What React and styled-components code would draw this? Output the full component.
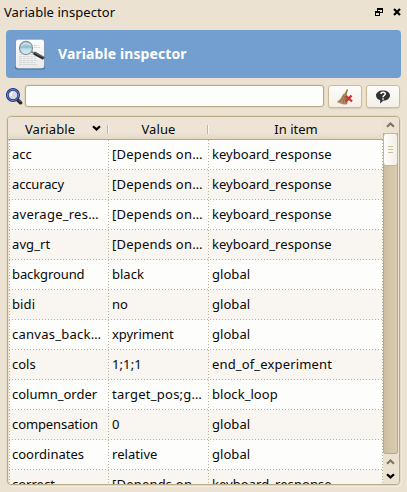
import React from 'react';
import styled, { createGlobalStyle } from 'styled-components';

const Global = createGlobalStyle`
  * { box-sizing: border-box; }
  body { margin: 0; background: #ebe2d1; overflow: hidden; }
`;

const Dock = styled.main`
  width: 407px;
  height: 492px;
  display: flex;
  flex-direction: column;
  padding: 0 6px 6px;
  background: #ebe2d1;
  color: #080808;
  font: 13px/18px "Noto Sans", "Open Sans", sans-serif;
`;

const TitleBar = styled.header`
  height: 30px;
  display: flex;
  align-items: center;
  padding: 0 0 6px;
  margin-left: -2px;
`;

const Label = styled.span`
  white-space: pre;
  letter-spacing: ${(p) => p.$track || 0}px;
`;

const WindowButtons = styled.div`
  margin-left: auto;
  display: flex;
  gap: 10px;
  svg { display: block; }
`;

const Banner = styled.section`
  height: 48px;
  display: flex;
  align-items: center;
  gap: 12px;
  padding-left: 8px;
  border-radius: 4px;
  background: #729fd0;
  color: #fff;
  font-size: 14px;
  font-weight: 700;
`;

const SearchRow = styled.div`
  display: flex;
  height: 24px;
  margin-top: 6px;
`;

const SearchIcon = styled.svg`
  flex: none;
  margin: 4px 2px 0 0;
`;

const SearchInput = styled.input`
  width: 299px;
  height: 22px;
  margin-top: 1px;
  padding: 0 5px;
  border: 1px solid #b9a888;
  border-radius: 3px;
  background: #fdfdfc;
  box-shadow: 0 0 0 1px #e3d8c4;
  outline: none;
`;

const ToolButton = styled.button`
  width: 34px;
  height: 23px;
  margin: 1px 0 0 ${(p) => p.$gap}px;
  padding: 0;
  display: grid;
  place-items: center;
  border: 1px solid #cdbb98;
  border-radius: 3px;
  background: linear-gradient(#fdfcfa, #f5f0e7);
  box-shadow: 0 1px 1px #d8ccb6;
`;

const TableFrame = styled.section`
  width: 393px;
  height: 369px;
  margin: 8px 0 0 1px;
  display: flex;
  border: 1px solid #bbaa87;
  border-radius: 4px;
  box-shadow: 0 0 0 1px #e2d7c2, 1px 1px 0 1px #f4eee2;
  overflow: hidden;
`;

const Grid = styled.div`
  flex: none;
  width: 375px;
  padding-left: 1px;
  overflow: hidden;
`;

const HeaderRow = styled.div`
  display: grid;
  grid-template-columns: 99px 100px 175px;
  height: 23px;
  margin-left: -1px;
  padding-left: 1px;
  background: linear-gradient(#ede4d5 70%, #e3d8c4);
  border-bottom: 1px solid #b7a682;
`;

const HeaderCell = styled.div`
  display: flex;
  align-items: center;
  justify-content: center;
  padding: 1px 0 0 1px;
  position: relative;
  & + &::before {
    content: "";
    position: absolute;
    left: -1px;
    top: 8px;
    width: 2px;
    height: 9px;
    background: linear-gradient(90deg, #c5b594 50%, #faf7f0 50%);
  }
`;

const SortArrow = styled.span`
  display: flex;
  margin: 0 -8px 2px 17px;
`;

const hDots = 'repeating-linear-gradient(90deg, #bcb199 0 1px, transparent 1px 3px)';
const vDots = 'repeating-linear-gradient(#bcb199 0 1px, transparent 1px 3px)';

const Row = styled.div`
  display: grid;
  grid-template-columns: 99px 100px 175px;
  height: 30px;
  background:
    ${hDots} 0 29px / 100% 1px no-repeat,
    ${vDots} 0 0 / 1px 100% no-repeat,
    ${vDots} 99px 0 / 1px 100% no-repeat,
    ${vDots} 199px 0 / 1px 100% no-repeat,
    ${vDots} 373px 0 / 1px 100% no-repeat,
    ${(p) => (p.$alt ? '#f9f5f0' : '#fdfdfc')};
`;

const Cell = styled.div`
  display: flex;
  align-items: center;
  padding: 0 0 3px ${(p) => p.$pad || 4}px;
  overflow: hidden;
`;

const ScrollBar = styled.aside`
  flex: none;
  width: 16px;
  display: flex;
  flex-direction: column;
  background: #ebe2d1;
  svg { display: block; margin-left: 3px; flex: none; }
`;

const UpStep = styled.div`
  height: 16px;
  padding-top: 5px;
`;

const Track = styled.div`
  height: 321px;
  width: 15px;
  border: 1px solid #bba985;
  border-top: 0;
  border-radius: 0 0 3px 3px;
  background: linear-gradient(90deg, #cdbda0, #dbcbb0);
`;

const Thumb = styled.div`
  width: 15px;
  height: 33px;
  margin-left: -1px;
  display: flex;
  flex-direction: column;
  align-items: center;
  justify-content: center;
  gap: 2px;
  border: 1px solid #c9b68f;
  border-radius: 3px;
  background: linear-gradient(90deg, #fefdfc, #f4efe5);
`;

const Grip = styled.i`
  width: 5px;
  height: 1px;
  background: #cdbc98;
`;

const DownSteps = styled.div`
  display: flex;
  flex-direction: column;
  gap: 8px;
  padding-top: 5px;
`;

const Chevron = ({ up, color = '#000' }) => (
  <svg width="9" height="6" viewBox="0 0 9 6">
    <path d={up ? 'M1 4.7 4.5 1.5 8 4.7' : 'M1 1.2 4.5 4.4 8 1.2'} fill="none" stroke={color} strokeWidth="2.2" />
  </svg>
);

const depends = { text: '[Depends on…', track: 0.2 };
const keyboard = { text: 'keyboard_response', track: 0.05 };
const global = { text: 'global', track: 0.05 };

const rows = [
  [{ text: 'acc' }, depends, keyboard],
  [{ text: 'accuracy', track: -0.15 }, depends, keyboard],
  [{ text: 'average_res…', track: 0.25 }, depends, keyboard],
  [{ text: 'avg_rt', track: 0.1 }, depends, keyboard],
  [{ text: 'background', track: -0.1 }, { text: 'black' }, global],
  [{ text: 'bidi', track: 0.1 }, { text: 'no' }, global],
  [{ text: 'canvas_back…', track: 0.25 }, { text: 'xpyriment', track: -0.05 }, global],
  [{ text: 'cols' }, { text: '1;1;1', track: 0.1 }, { text: 'end_of_experiment', track: 0.15 }],
  [{ text: 'column_order' }, { text: 'target_pos;g…', track: 0.25 }, { text: 'block_loop', track: 0.05 }],
  [{ text: 'compensation', track: -0.1 }, { text: '0' }, global],
  [{ text: 'coordinates' }, { text: 'relative', track: 0.05 }, global],
  [{ text: 'correct' }, depends, keyboard],
];

const InspectorIcon = () => (
  <svg width="32" height="32" viewBox="0 0 32 32">
    <defs>
      <linearGradient id="paper" x2="0" y2="1"><stop stopColor="#fdfdfd" /><stop offset="1" stopColor="#e9e9e9" /></linearGradient>
      <linearGradient id="glass" x2="0" y2="1"><stop stopColor="#b5d2dc" /><stop offset=".5" stopColor="#8dbfd0" /><stop offset=".55" stopColor="#b9dde6" /><stop offset="1" stopColor="#dceff3" /></linearGradient>
    </defs>
    <rect x="1" y="2" width="30" height="29.5" rx="2.5" fill="#3d5f88" opacity=".75" />
    <rect x="2" y="2" width="28" height="28" rx="2" fill="url(#paper)" stroke="#fafafa" strokeWidth=".6" />
    <path d="M5 14.5h18M5 16.5h15M5 18.5h19M5 20.5h17M5 22.5h19M5 24.5h16M5 26.5h18M20 7.5h5M20 9.5h6" stroke="#cfcfcf" strokeWidth=".8" strokeDasharray="3 .7" />
    <path d="m17 13.5 12.5 7" stroke="#777" strokeWidth="2" />
    <path d="m20 15 9.8 5.3" stroke="#25282a" strokeWidth="3.2" />
    <path d="m20.5 14.5 9 4.8" stroke="#868a8c" strokeWidth=".8" />
    <circle cx="12" cy="10" r="6.6" fill="url(#glass)" stroke="#87969b" strokeWidth="1.2" />
    <path d="M7.5 8C10 4.5 15 5.5 17 7.5" fill="none" stroke="#e1eef0" />
  </svg>
);

export default function App() {
  return (
    <Dock>
      <Global />
      <TitleBar>
        <Label $track={0.06}>Variable inspector</Label>
        <WindowButtons>
          <svg width="8" height="8" viewBox="0 0 8 8" shapeRendering="crispEdges">
            <path d="M2 0h6v5H5V4h2V2H3v1H2zM0 3h5v5H0zm1 2v2h3V5z" fillRule="evenodd" />
          </svg>
          <svg width="8" height="8" viewBox="0 0 8 8"><path d="m1 1 6 6M7 1 1 7" stroke="#000" strokeWidth="2.2" /></svg>
        </WindowButtons>
      </TitleBar>
      <Banner><InspectorIcon /><Label $track={0.1}>Variable inspector</Label></Banner>
      <SearchRow>
        <SearchIcon width="17" height="17" viewBox="0 0 17 17">
          <path d="m10.8 11 3.7 3.7" stroke="#282828" strokeWidth="3.6" strokeLinecap="round" />
          <path d="m12 11.5 2.5 2.5" stroke="#888" strokeWidth=".8" />
          <circle cx="7" cy="7" r="5.7" fill="#d8d9dc" stroke="#26378a" strokeWidth="2.7" />
          <circle cx="7" cy="7" r="5.6" fill="none" stroke="#7385cb" strokeWidth=".9" />
          <path d="M5 8V5.5L7 4" fill="none" stroke="#fff" strokeWidth="1.4" />
        </SearchIcon>
        <SearchInput aria-label="Search variables" />
        <ToolButton aria-label="Clear" $gap={4}>
          <svg width="16" height="16" viewBox="0 0 16 16">
            <path d="m10 0 1 .4-1.5 6-2.5-1z" fill="#a07c50" />
            <path d="M6.5 5.2 9.8 6.5 10 15C6 15.5 3 14 .5 12.8 3.7 11 5 8 6.5 5.2z" fill="#b39163" stroke="#866642" strokeWidth=".6" />
            <path d="M7 7 3 13M8 7l-2 7M9 7l-.5 7" stroke="#806342" strokeWidth=".7" />
            <path d="m9 7 6 5.5M14.5 6.5 9 12.5" stroke="#d72c32" strokeWidth="2.3" />
          </svg>
        </ToolButton>
        <ToolButton aria-label="Help" $gap={4}>
          <svg width="16" height="16" viewBox="0 0 16 16">
            <path d="M8 1.5c4 0 7 2.1 7 5s-2.8 5-6.4 5.1L5 14.5l.3-3.3C2.7 10.5 1 8.8 1 6.5c0-2.9 3-5 7-5z" fill="#303332" />
            <path d="M6 5c0-2.2 4.2-2.2 4.2 0C10.2 6.5 8 6.5 8 8.2M8 9.3v1.4" fill="none" stroke="#fff" strokeWidth="1.5" />
          </svg>
        </ToolButton>
      </SearchRow>
      <TableFrame>
        <Grid>
          <HeaderRow>
            <HeaderCell><Label $track={0.08}>Variable</Label><SortArrow><Chevron /></SortArrow></HeaderCell>
            <HeaderCell><Label $track={0.1}>Value</Label></HeaderCell>
            <HeaderCell><Label>In item</Label></HeaderCell>
          </HeaderRow>
          {rows.map((cells, i) => (
            <Row key={cells[0].text} $alt={i % 2 === 1}>
              {cells.map((cell, j) => (
                <Cell key={j} $pad={j === 0 ? 3 : 4}><Label $track={cell.track}>{cell.text}</Label></Cell>
              ))}
            </Row>
          ))}
        </Grid>
        <ScrollBar>
          <UpStep><Chevron up color="#81765f" /></UpStep>
          <Track><Thumb><Grip /><Grip /><Grip /></Thumb></Track>
          <DownSteps><Chevron up color="#81765f" /><Chevron /></DownSteps>
        </ScrollBar>
      </TableFrame>
    </Dock>
  );
}
